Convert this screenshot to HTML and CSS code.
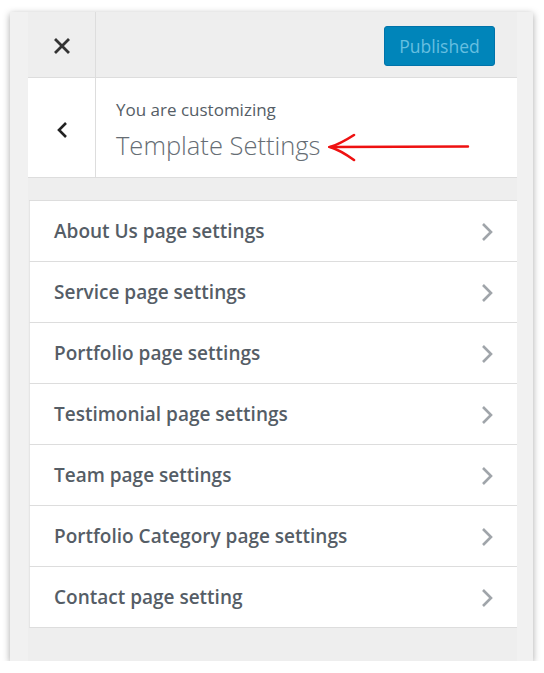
FILE: index.html
```html
<!DOCTYPE html>
<html>
<head>
<meta charset="utf-8">
<link rel="stylesheet" href="styles.css">
</head>
<body>
<div class="frame">
  <div class="strip-left"></div>
  <div class="panel">
    <div class="topbar">
      <div class="close-btn">
        <svg width="16" height="16" viewBox="0 0 16 16"><path d="M2 2 L14 14 M14 2 L2 14" stroke="#333" stroke-width="2.8" stroke-linecap="square" fill="none"/></svg>
      </div>
      <div class="top-spacer"></div>
      <div class="publish">Published</div>
    </div>
    <div class="info">
      <div class="back-btn">
        <svg width="12" height="18" viewBox="0 0 12 18"><path d="M10 2 L3 9 L10 16" stroke="#222" stroke-width="2.6" fill="none"/></svg>
      </div>
      <div class="info-text">
        <div class="info-sub">You are customizing</div>
        <div class="info-title-row">
          <span class="info-title">Template Settings</span>
          <svg class="annot-arrow" width="142" height="30" viewBox="0 0 142 30"><path d="M2 15 L140 14.5" stroke="#ee1111" stroke-width="2.4" fill="none" stroke-linecap="round"/><path d="M26 3 Q12 12 2 15 Q12 18 26 28" stroke="#ee1111" stroke-width="2.6" fill="none" stroke-linecap="round"/></svg>
        </div>
      </div>
    </div>
    <div class="gap"></div>
    <ul class="sections">
      <li class="section"><span>About Us page settings</span><svg class="chev" width="12" height="20" viewBox="0 0 12 20"><path d="M2 2 L10 10 L2 18" stroke="#a0a5aa" stroke-width="2.6" fill="none"/></svg></li>
      <li class="section"><span>Service page settings</span><svg class="chev" width="12" height="20" viewBox="0 0 12 20"><path d="M2 2 L10 10 L2 18" stroke="#a0a5aa" stroke-width="2.6" fill="none"/></svg></li>
      <li class="section"><span>Portfolio page settings</span><svg class="chev" width="12" height="20" viewBox="0 0 12 20"><path d="M2 2 L10 10 L2 18" stroke="#a0a5aa" stroke-width="2.6" fill="none"/></svg></li>
      <li class="section"><span>Testimonial page settings</span><svg class="chev" width="12" height="20" viewBox="0 0 12 20"><path d="M2 2 L10 10 L2 18" stroke="#a0a5aa" stroke-width="2.6" fill="none"/></svg></li>
      <li class="section"><span>Team page settings</span><svg class="chev" width="12" height="20" viewBox="0 0 12 20"><path d="M2 2 L10 10 L2 18" stroke="#a0a5aa" stroke-width="2.6" fill="none"/></svg></li>
      <li class="section"><span>Portfolio Category page settings</span><svg class="chev" width="12" height="20" viewBox="0 0 12 20"><path d="M2 2 L10 10 L2 18" stroke="#a0a5aa" stroke-width="2.6" fill="none"/></svg></li>
      <li class="section"><span>Contact page setting</span><svg class="chev" width="12" height="20" viewBox="0 0 12 20"><path d="M2 2 L10 10 L2 18" stroke="#a0a5aa" stroke-width="2.6" fill="none"/></svg></li>
    </ul>
    <div class="bottom-fill"></div>
  </div>
  <div class="strip-right"></div>
</div>
</body>
</html>
```

FILE: styles.css
```css
* { box-sizing: border-box; }
html, body { margin: 0; padding: 0; background: #fff; }
body { font-family: "Open Sans", "Noto Sans", sans-serif; color: #555d66; }

.frame {
  margin: 12px 0 0 10px;
  width: 523px;
  height: 649px;
  display: flex;
  background: #f1f1f1;
  box-shadow: 0 2px 7px rgba(0,0,0,0.35);
}
.strip-left { width: 18px; background: #f1f1f1; flex: none; }
.strip-right { width: 16px; background: #f1f1f1; flex: none; }

.panel {
  width: 489px;
  flex: none;
  background: #eeeeee;
  display: flex;
  flex-direction: column;
}

.topbar {
  height: 66px;
  display: flex;
  align-items: center;
  border-bottom: 1px solid #dddddd;
  flex: none;
}
.close-btn {
  width: 68px;
  height: 100%;
  border-right: 1px solid #dddddd;
  display: flex;
  align-items: center;
  justify-content: center;
  padding-top: 2px;
}
.top-spacer { flex: 1; }
.publish {
  width: 111px;
  height: 40px;
  margin-right: 22px;
  margin-top: 2px;
  background: #0085ba;
  border: 1px solid #0073aa;
  border-radius: 3px;
  color: #66bfe0;
  font-size: 17.5px;
  display: flex;
  align-items: center;
  justify-content: center;
}

.info {
  height: 100px;
  background: #fff;
  display: flex;
  border-bottom: 1px solid #dddddd;
  flex: none;
}
.back-btn {
  width: 68px;
  height: 100%;
  border-right: 1px solid #dddddd;
  display: flex;
  align-items: center;
  justify-content: center;
  padding-top: 4px;
}
.info-text {
  padding: 20px 0 0 20px;
  display: flex;
  flex-direction: column;
}
.info-sub {
  font-size: 17px;
  line-height: 24px;
  color: #555d66;
}
.info-title-row {
  display: flex;
  align-items: center;
  margin-top: 6px;
}
.info-title {
  font-size: 25.5px;
  font-weight: 300;
  line-height: 34px;
  color: #666d74;
}
.annot-arrow { margin-left: 8px; margin-top: 3px; flex: none; }

.gap { height: 22px; flex: none; }

.sections {
  list-style: none;
  margin: 0 0 0 1px;
  padding: 0;
  border-top: 1px solid #dddddd;
}
.section {
  height: 61px;
  background: #fff;
  border-bottom: 1px solid #dddddd;
  border-left: 1px solid #e6e6e6;
  display: flex;
  align-items: center;
  justify-content: space-between;
  padding: 0 24px 0 24px;
  font-size: 19px;
  font-weight: 600;
  color: #555d66;
}
.chev { flex: none; margin-top: 1px; }

.bottom-fill { flex: 1; }
```
